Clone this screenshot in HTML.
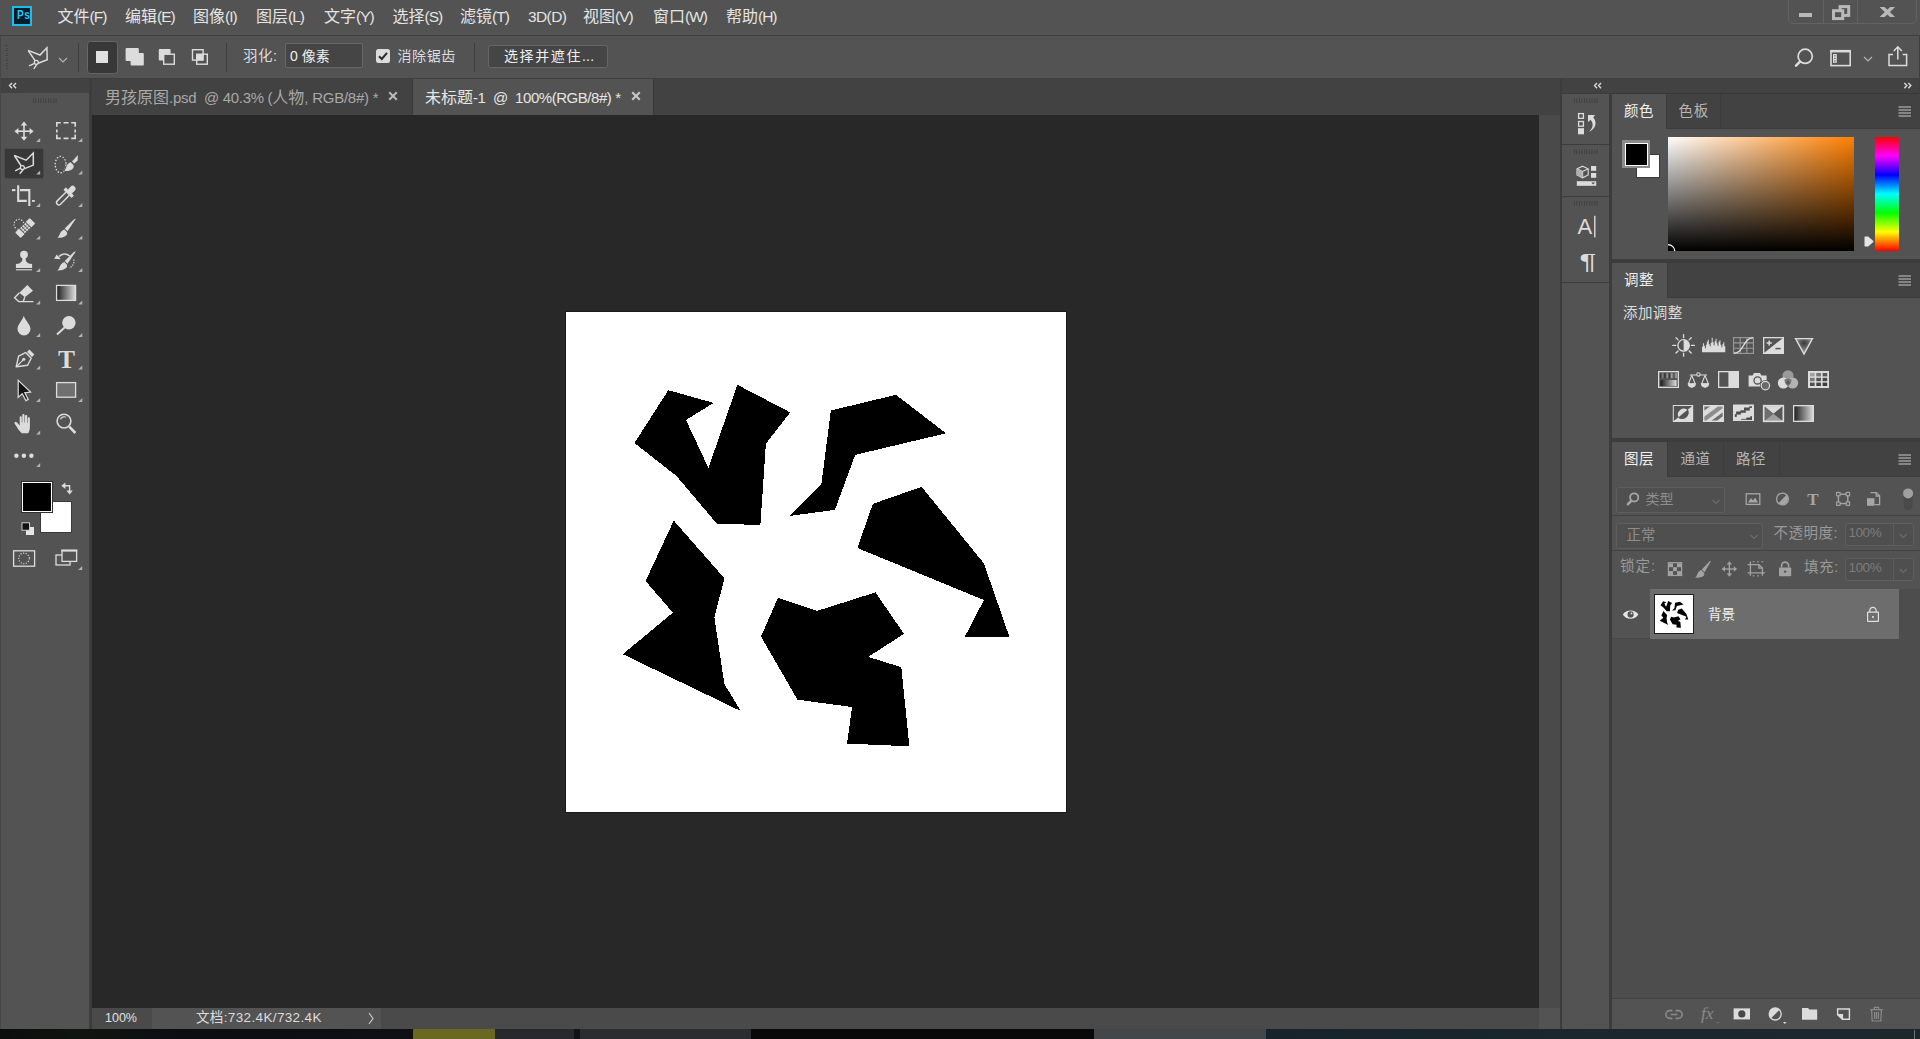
<!DOCTYPE html>
<html lang="zh-CN">
<head>
<meta charset="utf-8">
<title>Photoshop</title>
<style>
*{box-sizing:border-box;margin:0;padding:0}
html,body{width:1920px;height:1039px;overflow:hidden;background:#0e1116}
body{position:relative;font-family:"Liberation Sans","Noto Sans CJK SC",sans-serif;color:#dcdcdc;font-size:14px;line-height:1}
.abs{position:absolute}
.t{position:absolute;white-space:nowrap;line-height:20px;height:20px}
svg{position:absolute;overflow:visible}
/* main chrome */
#menubar{left:0;top:0;width:1920px;height:35px;background:#535353}
#optbar{left:0;top:35px;width:1920px;height:44px;background:#535353;border-top:1px solid #3f3f3f;border-bottom:1px solid #3f3f3f}
#desk{left:0;top:1029px;width:1920px;height:10px;background:#10151a}
#tools{left:0;top:79px;width:90px;height:950px;background:#535353;border-right:1px solid #3f3f3f}
#toolshead{left:0;top:79px;width:89px;height:14px;background:#424242}
#docgap{left:90px;top:79px;width:2px;height:950px;background:#3c3c3c}
#tabbar{left:92px;top:79px;width:1468px;height:36px;background:#424242}
#canvasbg{left:92px;top:115px;width:1447px;height:893px;background:#282828}
#vscroll{left:1539px;top:115px;width:21px;height:893px;background:#4a4a4a}
#status{left:92px;top:1008px;width:1468px;height:21px;background:#4a4a4a}
#dockgap{left:1560px;top:79px;width:2px;height:950px;background:#3c3c3c}
#dockhead{left:1562px;top:79px;width:358px;height:15px;background:#424242;border-bottom:1px solid #383838}
#strip{left:1562px;top:93px;width:48px;height:936px;background:#535353;border-top:1px solid #3c3c3c}
#stripgap{left:1609px;top:93px;width:3px;height:936px;background:#3c3c3c}
.panel{position:absolute;left:1612px;width:308px;background:#535353}
.ptabs{position:absolute;left:0;top:0;width:308px;height:35px;background:#424242;border-bottom:1px solid #3c3c3c}
.ptab{position:absolute;top:0;height:34px;border-right:1px solid #3c3c3c;color:#b4b4b4;font-size:14.5px;letter-spacing:0.5px;line-height:34px;text-align:left}
.ptab.on{background:#535353;color:#f0f0f0;height:35px}
.pgap{position:absolute;left:1612px;width:308px;height:4px;background:#3c3c3c}
</style>
</head>
<body>
<!-- ===== base regions ===== -->
<div class="abs" id="menubar"></div>
<div class="abs" id="optbar"></div>
<div class="abs" id="tools"></div>
<div class="abs" id="toolshead"></div>
<div class="abs" id="docgap"></div>
<div class="abs" id="tabbar"></div>
<div class="abs" id="canvasbg"></div>
<div class="abs" id="vscroll"></div>
<div class="abs" id="status"></div>
<div class="abs" id="dockgap"></div>
<div class="abs" id="dockhead"></div>
<div class="abs" id="strip"></div>
<div class="abs" id="stripgap"></div>
<div class="abs" id="desk"></div>

<!-- ===== MENUBAR ===== -->
<!-- PS logo -->
<div class="abs" style="left:12px;top:6px;width:20.3px;height:20px;background:#001c25;border:2px solid #16bef2"></div>
<div class="t" style="left:16.6px;top:5.4px;font-size:12.5px;font-weight:bold;color:#1cc8ff;letter-spacing:0.6px;line-height:20px;transform:scaleX(0.8);transform-origin:0 0">Ps</div>
<div class="t" style="left:57.5px;top:5.5px;font-size:16px;color:#e4e4e4;line-height:22px;height:22px">文件<span style="font-size:15.5px;letter-spacing:-1px">(F)</span></div>
<div class="t" style="left:125px;top:5.5px;font-size:16px;color:#e4e4e4;line-height:22px;height:22px">编辑<span style="font-size:15.5px;letter-spacing:-1px">(E)</span></div>
<div class="t" style="left:193px;top:5.5px;font-size:16px;color:#e4e4e4;line-height:22px;height:22px">图像<span style="font-size:15.5px;letter-spacing:-1px">(I)</span></div>
<div class="t" style="left:256px;top:5.5px;font-size:16px;color:#e4e4e4;line-height:22px;height:22px">图层<span style="font-size:15.5px;letter-spacing:-1px">(L)</span></div>
<div class="t" style="left:324px;top:5.5px;font-size:16px;color:#e4e4e4;line-height:22px;height:22px">文字<span style="font-size:15.5px;letter-spacing:-1px">(Y)</span></div>
<div class="t" style="left:392.5px;top:5.5px;font-size:16px;color:#e4e4e4;line-height:22px;height:22px">选择<span style="font-size:15.5px;letter-spacing:-1px">(S)</span></div>
<div class="t" style="left:460px;top:5.5px;font-size:16px;color:#e4e4e4;line-height:22px;height:22px">滤镜<span style="font-size:15.5px;letter-spacing:-1px">(T)</span></div>
<div class="t" style="left:528px;top:5.5px;font-size:16px;color:#e4e4e4;line-height:22px;height:22px"><span style="font-size:15.5px;letter-spacing:-0.6px">3D(D)</span></div>
<div class="t" style="left:583px;top:5.5px;font-size:16px;color:#e4e4e4;line-height:22px;height:22px">视图<span style="font-size:15.5px;letter-spacing:-1px">(V)</span></div>
<div class="t" style="left:653px;top:5.5px;font-size:16px;color:#e4e4e4;line-height:22px;height:22px">窗口<span style="font-size:15.5px;letter-spacing:-1px">(W)</span></div>
<div class="t" style="left:726px;top:5.5px;font-size:16px;color:#e4e4e4;line-height:22px;height:22px">帮助<span style="font-size:15.5px;letter-spacing:-1px">(H)</span></div>
<!-- window controls -->
<div class="abs" style="left:1788px;top:-2px;width:129px;height:26px;border:1px solid #626262;border-radius:0 0 5px 5px"></div>
<div class="abs" style="left:1823px;top:0;width:1px;height:23px;background:#626262"></div>
<div class="abs" style="left:1857px;top:0;width:1px;height:23px;background:#626262"></div>
<div class="abs" style="left:1799px;top:12.8px;width:13.2px;height:4.3px;background:#b9b9b9"></div>
<svg style="left:1830px;top:3px" width="22" height="19" viewBox="1830 3 22 19"><rect x="1840.1" y="6.6" width="8.6" height="8.8" fill="none" stroke="#b9b9b9" stroke-width="3"/><rect x="1833.5" y="10.7" width="9.2" height="7.9" fill="#535353" stroke="#b9b9b9" stroke-width="3"/></svg>
<svg style="left:1879px;top:6.9px;overflow:hidden" width="17" height="10.3" viewBox="1879 6.9 17 10.3"><path d="M1881 6 L1893.7 18 M1893.7 6 L1881 18" stroke="#b9b9b9" stroke-width="3.5" fill="none"/></svg>

<!-- ===== OPTIONS BAR ===== -->
<!-- gripper -->
<svg style="left:4px;top:44px" width="6" height="26" viewBox="4 44 6 26"><path d="M5 45.5h3M5 50.5h3M5 55.5h3M5 60.5h3M5 65.5h3M6 48.5h2M6 53.5h2M6 58.5h2M6 63.5h2M6 68.5h2" stroke="#444" stroke-width="1" fill="none"/></svg>
<!-- polygon lasso icon -->
<svg style="left:27px;top:46px" width="23" height="24" viewBox="0 0 23 24"><path d="M1.1 4.4 L13 9 L19.9 1.8 L20.2 13.8 L11.2 17.2" stroke="#dcdcdc" stroke-width="1.5" fill="none" stroke-linejoin="miter"/><path d="M1.3 4.6 L8.2 14.8" stroke="#dcdcdc" stroke-width="1.5" fill="none"/><circle cx="9.3" cy="16.3" r="2" stroke="#dcdcdc" stroke-width="1.3" fill="none"/><path d="M7.6 17.4 L2 19.8 M10 18.2 L6.8 22.8" stroke="#dcdcdc" stroke-width="1.4" fill="none"/></svg>
<svg style="left:58px;top:57px" width="10" height="6" viewBox="0 0 10 6"><path d="M1 1 L5 5 L9 1" stroke="#b4b4b4" stroke-width="1.2" fill="none"/></svg>
<div class="abs" style="left:78px;top:43px;width:1px;height:29px;background:#3e3e3e"></div>
<!-- selection mode buttons -->
<div class="abs" style="left:87px;top:41px;width:31px;height:32.5px;background:#383838;border:1px solid #666;border-radius:3.5px"></div>
<div class="abs" style="left:95.8px;top:50.8px;width:12.4px;height:12.4px;background:#e0e0e0"></div>
<svg style="left:125px;top:47px" width="20" height="20" viewBox="0 0 20 20"><rect x="0.6" y="1" width="13.2" height="13" rx="1" fill="#dcdcdc"/><rect x="5.6" y="6" width="13.2" height="12.6" rx="1" fill="#dcdcdc"/></svg>
<svg style="left:158px;top:48px" width="18" height="18" viewBox="0 0 18 18"><rect x="0.8" y="1" width="11.8" height="11.6" rx="0.8" fill="#dcdcdc"/><rect x="5.7" y="6.2" width="10.6" height="10" fill="#535353" stroke="#dcdcdc" stroke-width="1.4"/></svg>
<svg style="left:191px;top:48px" width="18" height="18" viewBox="0 0 18 18"><rect x="1.5" y="1.7" width="10.6" height="10.4" fill="none" stroke="#dcdcdc" stroke-width="1.4"/><rect x="5.7" y="6.2" width="10.6" height="10" fill="none" stroke="#dcdcdc" stroke-width="1.4"/><rect x="5.7" y="6.2" width="6.4" height="5.9" fill="#dcdcdc"/></svg>
<div class="abs" style="left:226px;top:43px;width:1px;height:29px;background:#3e3e3e"></div>
<div class="t" style="left:243px;top:45px;font-size:14.5px;color:#dcdcdc;line-height:22px;height:22px;letter-spacing:0.5px">羽化:</div>
<div class="abs" style="left:285px;top:43px;width:78px;height:25px;background:#454545;border:1px solid #686868;border-radius:2px"></div>
<div class="t" style="left:290px;top:45px;font-size:14px;color:#f0f0f0;line-height:22px;height:22px">0 像素</div>
<div class="abs" style="left:376px;top:49px;width:14px;height:14px;background:#dcdcdc;border-radius:2.5px"></div>
<svg style="left:376px;top:49px" width="14" height="14" viewBox="0 0 14 14"><path d="M3 7.2 L5.8 10 L11 3.8" stroke="#2a2a2a" stroke-width="2" fill="none"/></svg>
<div class="t" style="left:397.5px;top:45px;font-size:14px;color:#dcdcdc;line-height:22px;height:22px;letter-spacing:0.6px">消除锯齿</div>
<div class="abs" style="left:474px;top:43px;width:1px;height:29px;background:#3e3e3e"></div>
<div class="abs" style="left:488px;top:45px;width:120px;height:23px;background:#454545;border:1px solid #666;border-radius:3px"></div>
<div class="t" style="left:504px;top:45px;font-size:14px;color:#f0f0f0;line-height:22px;height:22px;letter-spacing:1.6px">选择并遮住<span style="letter-spacing:0.2px">...</span></div>
<!-- right side icons -->
<svg style="left:1793px;top:46px" width="22" height="22" viewBox="1793 46 22 22"><circle cx="1805.2" cy="56.3" r="7.1" stroke="#dcdcdc" stroke-width="1.7" fill="none"/><path d="M1800 61.6 L1796 65.6" stroke="#dcdcdc" stroke-width="2.5" stroke-linecap="round" fill="none"/></svg>
<svg style="left:1829px;top:48px" width="24" height="20" viewBox="1829 48 24 20"><rect x="1831" y="51.4" width="19.2" height="14.2" fill="none" stroke="#dcdcdc" stroke-width="1.6"/><rect x="1830.2" y="49.9" width="20.8" height="2.4" fill="#dcdcdc"/><rect x="1833" y="54" width="3.8" height="8.8" fill="#dcdcdc"/><path d="M1834.2 55.8h1.4M1834.2 58.4h1.4M1834.2 61h1.4" stroke="#535353" stroke-width="1"/></svg>
<svg style="left:1863px;top:56px" width="10" height="6" viewBox="0 0 10 6"><path d="M1 1 L5 5 L9 1" stroke="#b4b4b4" stroke-width="1.2" fill="none"/></svg>
<svg style="left:1887px;top:45px" width="22" height="22" viewBox="0 0 22 22"><path d="M6 9.5 H2 V20.5 H19.6 V9.5 H15.6" stroke="#dcdcdc" stroke-width="1.5" fill="none"/><path d="M10.8 14.5 V2.2 M6.8 6 L10.8 1.8 L14.8 6" stroke="#dcdcdc" stroke-width="1.5" fill="none"/></svg>
<div class="abs" style="left:1919px;top:36px;width:1px;height:993px;background:#3f3f3f"></div>
<div class="abs" style="left:0;top:36px;width:1px;height:993px;background:#464646"></div>

<!-- ===== TOOLS ===== -->
<svg style="left:0;top:0" width="92" height="600" viewBox="0 0 92 600"><defs><linearGradient id="tg" x1="0" x2="1" y1="0" y2="0"><stop offset="0" stop-color="#1e1e1e"/><stop offset="1" stop-color="#dcdcdc"/></linearGradient></defs>
<path d="M12 83 L9.6 85.6 L12 88.2 M16 83 L13.6 85.6 L16 88.2" fill="none" stroke="#d4d4d4" stroke-width="1.5"/>
<path d="M33.4 98.4v4.6M35.7 98.4v4.6M38.5 98.4v4.6M40.8 98.4v4.6M43.6 98.4v4.6M45.9 98.4v4.6M48.7 98.4v4.6M51.0 98.4v4.6M53.8 98.4v4.6M56.1 98.4v4.6" stroke="#414141" stroke-width="1" fill="none"/>
<rect x="4.5" y="148.5" width="39" height="30" rx="2" fill="#383838" stroke="#4a4a4a" stroke-width="1"/>
<g transform="translate(24,131.2)" fill="#dcdcdc" stroke="none"><rect x="-7" y="-0.8" width="14" height="1.6"/><rect x="-0.8" y="-7" width="1.6" height="14"/><polygon points="0,-9.6 3.3,-5.6 -3.3,-5.6"/><polygon points="0,9.6 3.3,5.6 -3.3,5.6"/><polygon points="-9.6,0 -5.6,-3.3 -5.6,3.3"/><polygon points="9.6,0 5.6,-3.3 5.6,3.3"/></g>
<polygon points="40.2,138.0 40.2,142.1 36.1,142.1" fill="#b4b4b4"/>
<g transform="translate(66,131)" fill="none" stroke="#dcdcdc" stroke-width="1.6"><path d="M-9.2 -4.2V-8.2H-5.2 M-2.5 -8.2H2.5 M5.2 -8.2H9.2V-4.2 M9.2 -1.5V1.5 M9.2 3.6V7.4H5.2 M2.5 7.4H-2.5 M-5.2 7.4H-9.2V3.6 M-9.2 1.5V-1.5"/></g>
<polygon points="82.3,138.0 82.3,142.1 78.2,142.1" fill="#b4b4b4"/>
<g transform="translate(24,164.0)" fill="none" stroke="#dcdcdc" stroke-width="1.5" stroke-linejoin="miter"><path d="M-9.8 -8.6 L2.1 -3.8 L9.3 -11 L9.3 1.1 L0.6 4.6"/><path d="M-9.6 -8.5 L-2.8 2"/><circle cx="-1.6" cy="3.6" r="2" stroke-width="1.3"/><path d="M-3.6 4.2 L-8.8 6.8 M-0.8 5.6 L-4.3 9.8"/></g>
<polygon points="40.2,170.5 40.2,174.6 36.1,174.6" fill="#b4b4b4"/>
<g transform="translate(66,164.0)"><ellipse cx="-5.4" cy="0.6" rx="5.4" ry="8.2" fill="none" stroke="#dcdcdc" stroke-width="1.4" stroke-dasharray="1.4 1.7"/><path d="M11.9 -8.9 L11.6 -3.4 L8.3 -0.4 L6 -2.4 Z" fill="#dcdcdc"/><path d="M4.6 -1.8 L7.4 1 C9 4.6 4.5 7.6 -1.8 6.9 C1 5 -0.6 -0.2 4.6 -1.8Z" fill="#dcdcdc" stroke="#535353" stroke-width="1.2" paint-order="stroke"/></g>
<polygon points="82.3,170.5 82.3,174.6 78.2,174.6" fill="#b4b4b4"/>
<g transform="translate(24,196)" fill="none" stroke="#dcdcdc" stroke-width="2.1"><path d="M-5.8 -10.8 V4.9 H2.8"/><path d="M-12 -5.9 H-8.6"/><path d="M-4 -5.9 H5.3 V10"/><path d="M8 4.9 H10.8" stroke-width="1.8"/></g>
<polygon points="40.2,203.0 40.2,207.1 36.1,207.1" fill="#b4b4b4"/>
<g transform="translate(65.8,195.6) rotate(45)"><rect x="-2.9" y="-12.6" width="5.8" height="8" rx="2.6" fill="#dcdcdc"/><rect x="-5.8" y="-5.8" width="11.6" height="3.4" rx="0.6" fill="#dcdcdc"/><path d="M-2.3 -2.4 V9.8 A2.3 2.3 0 0 0 2.3 9.8 V-2.4" fill="none" stroke="#dcdcdc" stroke-width="1.5"/></g>
<polygon points="82.3,203.0 82.3,207.1 78.2,207.1" fill="#b4b4b4"/>
<g transform="translate(24,228.0)"><circle cx="-5" cy="-3.6" r="5" fill="none" stroke="#dcdcdc" stroke-width="1.2" stroke-dasharray="1.3 1.5"/><g transform="translate(1.2,0) rotate(-45)"><rect x="-10.6" y="-4.2" width="21.2" height="8.4" rx="1" fill="#dcdcdc" stroke="#535353" stroke-width="0.8"/><rect x="-4.8" y="-4.2" width="9.6" height="8.4" fill="#535353"/><g fill="#dcdcdc"><rect x="-3.9" y="-3.4" width="2.1" height="1.9"/><rect x="-1.05" y="-3.4" width="2.1" height="1.9"/><rect x="1.8" y="-3.4" width="2.1" height="1.9"/><rect x="-3.9" y="-0.95" width="2.1" height="1.9"/><rect x="-1.05" y="-0.95" width="2.1" height="1.9"/><rect x="1.8" y="-0.95" width="2.1" height="1.9"/><rect x="-3.9" y="1.5" width="2.1" height="1.9"/><rect x="-1.05" y="1.5" width="2.1" height="1.9"/><rect x="1.8" y="1.5" width="2.1" height="1.9"/></g></g></g>
<polygon points="40.2,235.5 40.2,239.6 36.1,239.6" fill="#b4b4b4"/>
<g transform="translate(66,228.0)" fill="#dcdcdc"><path d="M10 -9.4 L7.8 -8.6 L-1.3 0.4 L1.5 3.2 Z"/><path d="M-1.6 1.5 L0.8 3.9 C2.4 7 -1.6 10 -8.7 9.8 C-5.8 8.2 -6.6 3 -1.6 1.5Z"/></g>
<polygon points="82.3,235.5 82.3,239.6 78.2,239.6" fill="#b4b4b4"/>
<g transform="translate(24,261)" fill="#dcdcdc"><circle cx="0" cy="-6.4" r="3.9"/><path d="M-1.6 -3.5 H1.6 C1.6 0.5 2.5 2.6 8.1 3 V7 H-8.1 V3 C-2.5 2.6 -1.6 0.5 -1.6 -3.5Z"/><rect x="-8.1" y="8.2" width="16.2" height="1.1"/></g>
<polygon points="40.2,268.0 40.2,272.1 36.1,272.1" fill="#b4b4b4"/>
<g transform="translate(66,261)"><path d="M-7 -4.4 C-4 -7.8 0.5 -7.8 3.6 -5" fill="none" stroke="#dcdcdc" stroke-width="1.5"/><polygon points="-11.8,-2.2 -5.2,-1.8 -9.2,-6.6" fill="#dcdcdc"/><path d="M7.8 -1.6 C8.6 3 6 6 3 6.8" fill="none" stroke="#dcdcdc" stroke-width="1.2" stroke-dasharray="1.2 1.4"/></g>
<g transform="translate(66,260.6)" fill="#dcdcdc"><path d="M10 -9.4 L7.8 -8.6 L-1.3 0.4 L1.5 3.2 Z"/><path d="M-1.6 1.5 L0.8 3.9 C2.4 7 -1.6 10 -8.7 9.8 C-5.8 8.2 -6.6 3 -1.6 1.5Z"/></g>
<polygon points="82.3,268.0 82.3,272.1 78.2,272.1" fill="#b4b4b4"/>
<g transform="translate(24,293.0)"><path d="M3.3 -8 L9 -2.3 L0.8 4.3 L-4.6 -0.3 Z" fill="#dcdcdc"/><path d="M-4.6 -0.3 L-9.4 4.8 L-5.3 8.6 H9.4 M-5.3 8.6 H-0.8 L0.8 4.3" fill="none" stroke="#dcdcdc" stroke-width="1.4"/></g>
<polygon points="40.2,300.5 40.2,304.6 36.1,304.6" fill="#b4b4b4"/>
<rect x="56.6" y="285.4" width="19" height="15" fill="url(#tg)" stroke="#dcdcdc" stroke-width="1.3"/>
<polygon points="82.3,300.5 82.3,304.6 78.2,304.6" fill="#b4b4b4"/>
<g transform="translate(24,326)"><path d="M-0.2 -10.2 C0.8 -6 6.5 -1.5 6.5 3 A6.5 6.5 0 1 1 -6.5 3 C-6.5 -1.5 -1.2 -6 -0.2 -10.2Z" fill="#dcdcdc"/></g>
<polygon points="40.2,333.0 40.2,337.1 36.1,337.1" fill="#b4b4b4"/>
<g transform="translate(66,326)"><circle cx="2.9" cy="-3.3" r="6.7" fill="#dcdcdc"/><path d="M-1.4 1.6 L-9 8.4" stroke="#dcdcdc" stroke-width="2" fill="none"/></g>
<polygon points="82.3,333.0 82.3,337.1 78.2,337.1" fill="#b4b4b4"/>
<g transform="translate(24,359.0)"><path d="M-7.8 7.8 L-5.4 -2.8 L1.6 -6.4 L7.2 -0.8 L3.6 6.2 Z" fill="none" stroke="#dcdcdc" stroke-width="1.4" stroke-linejoin="round"/><path d="M-7.8 7.8 L-0.6 0.6" stroke="#dcdcdc" stroke-width="1.2"/><circle cx="-0.2" cy="0.2" r="1.5" fill="#dcdcdc"/><path d="M3 -7 L5.4 -9.4 L10.4 -4.4 L8 -2 Z" fill="#dcdcdc"/></g>
<polygon points="40.2,365.5 40.2,369.6 36.1,369.6" fill="#b4b4b4"/>
<text x="66.6" y="367.7" text-anchor="middle" font-family="Liberation Serif,serif" font-weight="bold" font-size="25.5" fill="#dcdcdc">T</text>
<polygon points="82.3,365.5 82.3,369.6 78.2,369.6" fill="#b4b4b4"/>
<g transform="translate(24,391)"><path d="M-5.8 -10.6 V6.4 L-1.8 2.8 L1.9 9.6 L4.2 8.4 L0.8 1.8 L6.6 1 Z" fill="#141414" stroke="#dcdcdc" stroke-width="1.2" stroke-linejoin="miter"/></g>
<polygon points="40.2,398.0 40.2,402.1 36.1,402.1" fill="#b4b4b4"/>
<rect x="56.6" y="382.6" width="19" height="14.6" fill="#707070" stroke="#dcdcdc" stroke-width="1.3"/>
<polygon points="82.3,398.0 82.3,402.1 78.2,402.1" fill="#b4b4b4"/>
<g transform="translate(24,424.0)" fill="#dcdcdc"><path d="M-2.2 9.2 C-5 7 -7 3.4 -9.4 -0.4 C-10 -1.9 -8.2 -2.9 -7 -1.6 L-4.3 1.6 V-6.6 C-4.3 -8.3 -2.2 -8.3 -2.2 -6.6 V-1.5 H-1.7 V-8.6 C-1.7 -10.4 0.5 -10.4 0.5 -8.6 V-1.5 H1 V-7.8 C1 -9.5 3.2 -9.5 3.2 -7.8 V-1.2 H3.7 V-5.6 C3.7 -7.3 5.9 -7.3 5.9 -5.6 V3 C5.9 6 5 7.6 4.2 9.2 Z"/></g>
<polygon points="40.2,430.5 40.2,434.6 36.1,434.6" fill="#b4b4b4"/>
<g transform="translate(66,424.0)" fill="none" stroke="#dcdcdc"><circle cx="-2" cy="-2.9" r="6.9" stroke-width="1.6"/><path d="M3.2 2.6 L9.4 9" stroke-width="2.6"/><path d="M-5.6 -4.6 A4.2 4.2 0 0 1 0 -6.8" stroke-width="1.1"/></g>
<circle cx="16.4" cy="455.7" r="2.2" fill="#dcdcdc"/><circle cx="23.9" cy="455.7" r="2.2" fill="#dcdcdc"/><circle cx="31.4" cy="455.7" r="2.2" fill="#dcdcdc"/>
<polygon points="40.2,463 40.2,467.1 36.2,467.1" fill="#b4b4b4"/>
<rect x="40.5" y="501.5" width="31" height="31" fill="#ffffff" stroke="#3a3a3a" stroke-width="1"/>
<rect x="21.5" y="481.5" width="31" height="31" fill="#000" stroke="#2e2e2e" stroke-width="1"/><rect x="22.5" y="482.5" width="29" height="29" fill="#000" stroke="#fff" stroke-width="1"/>
<g fill="none" stroke="#dcdcdc" stroke-width="1.4"><path d="M64 485.8 H69.6 V491.5"/></g><polygon points="61.3,485.8 65.4,482.6 65.4,489" fill="#dcdcdc"/><polygon points="69.6,494.6 66.4,490.4 72.8,490.4" fill="#dcdcdc"/>
<rect x="26" y="527" width="8" height="8" fill="#e6e6e6"/><rect x="22" y="522.8" width="7.6" height="7.4" fill="#111" stroke="#dcdcdc" stroke-width="0.9"/>
<rect x="13.6" y="550.8" width="21" height="15.4" fill="none" stroke="#dcdcdc" stroke-width="1.3"/><circle cx="24" cy="558.4" r="5.3" fill="none" stroke="#dcdcdc" stroke-width="1.2" stroke-dasharray="1.1 1.5"/>
<rect x="56" y="555" width="14" height="10" fill="none" stroke="#dcdcdc" stroke-width="1.3"/><rect x="62" y="550.4" width="14.6" height="11" fill="#535353" stroke="#dcdcdc" stroke-width="1.3"/><rect x="61.4" y="549.6" width="15.8" height="2" fill="#dcdcdc"/>
<polygon points="82.2,566 82.2,570.1 78.2,570.1" fill="#b4b4b4"/>
</svg>

<!-- ===== DOC TABS + CANVAS ===== -->
<!-- doc tabs -->
<div class="abs" style="left:92px;top:79px;width:321px;height:35px;background:#424242;border-right:1px solid #383838"></div>
<div class="t" id="tab1" style="left:105px;top:87px;font-size:16px;color:#a8a8a8;line-height:21px;height:21px">男孩原图<span style="font-size:15px;letter-spacing:-0.3px">.psd&nbsp; @ 40.3% (</span>人物<span style="font-size:15px;letter-spacing:-0.25px">, RGB/8#)&nbsp;*</span></div>
<svg style="left:388px;top:91px" width="10" height="10" viewBox="0 0 10 10"><path d="M1.2 1.2 L8.8 8.8 M8.8 1.2 L1.2 8.8" stroke="#b8b8b8" stroke-width="2.1" fill="none"/></svg>
<div class="abs" style="left:413px;top:79px;width:241px;height:36px;background:#535353;border-right:1px solid #383838"></div>
<div class="t" id="tab2" style="left:425px;top:87px;font-size:16px;color:#e6e6e6;line-height:21px;height:21px">未标题<span style="font-size:15px;letter-spacing:-0.45px">-1&nbsp; @&nbsp; 100%(RGB/8#) *</span></div>
<svg style="left:631px;top:91px" width="10" height="10" viewBox="0 0 10 10"><path d="M1.2 1.2 L8.8 8.8 M8.8 1.2 L1.2 8.8" stroke="#c8c8c8" stroke-width="2.1" fill="none"/></svg>
<!-- canvas -->
<div class="abs" style="left:565px;top:311px;width:502px;height:502px;background:#1a1a1a"></div>
<svg style="left:566px;top:312px" width="500" height="500" viewBox="566 312 500 500" shape-rendering="crispEdges">
<rect x="566" y="312" width="500" height="500" fill="#ffffff"/>
<g fill="#000000">
<polygon points="668.3,390.2 713.6,402.9 686,420 708.4,467.9 737.4,384.8 790.2,412.4 765.9,443.6 760.4,524.8 717.1,524 676.5,476 634.5,443"/>
<polygon points="830.9,410.5 895.9,394.8 946,433.3 855.2,454.9 834.9,509.9 789.7,515.9 821.4,484.2"/>
<polygon points="872.8,503.9 921.6,486.8 983.9,563.4 1009.6,637.4 964.9,636.6 983.9,600 857.4,548"/>
<polygon points="673.8,520.6 724.4,578.3 714.4,617.6 724.4,684 740.7,711 622.8,654.2 672.9,612.7 645.6,581"/>
<polygon points="778,597.8 817.3,610.8 875.5,592.4 904,633.9 868.2,656.9 901.3,667.2 909.4,746.3 847.1,743.6 852,707 797.5,699.7 761,636.6"/>
</g>
</svg>
<!-- status bar -->
<div class="abs" style="left:152px;top:1008px;width:229px;height:21px;background:#535353"></div>
<div class="t" style="left:105px;top:1008px;font-size:12.5px;color:#e0e0e0;line-height:20px">100%</div>
<div class="t" style="left:196px;top:1008px;font-size:13.5px;color:#dcdcdc;line-height:20px;letter-spacing:0.36px">文档:732.4K/732.4K</div>
<svg style="left:367px;top:1012px" width="8" height="13" viewBox="0 0 8 13"><path d="M2 1 L6 6.5 L2 12" stroke="#c8c8c8" stroke-width="1.2" fill="none"/></svg>
<div class="abs" style="left:1539px;top:1008px;width:21px;height:21px;background:#535353"></div>

<!-- ===== ICON STRIP ===== -->
<svg style="left:1562px;top:79px" width="358" height="220" viewBox="1562 79 358 220">
<path d="M1597 83 L1594.6 85.6 L1597 88.2 M1601 83 L1598.6 85.6 L1601 88.2" fill="none" stroke="#d4d4d4" stroke-width="1.5"/>
<path d="M1904.4 83 L1906.8 85.6 L1904.4 88.2 M1908.4 83 L1910.8 85.6 L1908.4 88.2" fill="none" stroke="#d4d4d4" stroke-width="1.5"/>
<g stroke="#414141" stroke-width="1" fill="none">
<path d="M1574.4 98.4v4.6M1576.7 98.4v4.6M1579.5 98.4v4.6M1581.8 98.4v4.6M1584.6 98.4v4.6M1586.9 98.4v4.6M1589.7 98.4v4.6M1592.0 98.4v4.6M1594.8 98.4v4.6M1597.1 98.4v4.6"/>
<path d="M1574.4 149.6v4.6M1576.7 149.6v4.6M1579.5 149.6v4.6M1581.8 149.6v4.6M1584.6 149.6v4.6M1586.9 149.6v4.6M1589.7 149.6v4.6M1592.0 149.6v4.6M1594.8 149.6v4.6M1597.1 149.6v4.6"/>
<path d="M1574.4 201v4.6M1576.7 201v4.6M1579.5 201v4.6M1581.8 201v4.6M1584.6 201v4.6M1586.9 201v4.6M1589.7 201v4.6M1592.0 201v4.6M1594.8 201v4.6M1597.1 201v4.6"/>
</g>
<rect x="1562" y="144" width="47" height="1" fill="#3c3c3c"/>
<rect x="1562" y="196" width="47" height="1" fill="#3c3c3c"/>
<rect x="1562" y="282" width="47" height="1" fill="#3c3c3c"/>
<!-- history -->
<g fill="none" stroke="#dcdcdc" stroke-width="1.3"><rect x="1578.6" y="113.6" width="4.8" height="4.7"/><rect x="1578.6" y="121.5" width="4.8" height="4.7"/></g>
<rect x="1578" y="128.2" width="6" height="6.1" fill="#dcdcdc"/>
<path d="M1588 115.1 H1595.1 L1593.2 117.2 C1597 121.5 1596.6 128.5 1588.8 132 C1593 128 1594.2 124 1590.4 119.8 L1588 122.3 Z" fill="#dcdcdc"/>
<!-- 3D -->
<g fill="none" stroke="#dcdcdc" stroke-width="1.1"><path d="M1582.6 166.2 L1588.2 168.8 V175 L1582.6 177.8 L1577 175 V168.8 Z"/><path d="M1577 168.8 L1582.6 171.4 L1588.2 168.8 M1582.6 171.4 V177.8"/></g>
<path d="M1577 168.8 L1582.6 171.4 V177.8 L1577 175 Z" fill="#b0b0b0"/>
<rect x="1591" y="166" width="5.2" height="4.8" fill="#dcdcdc"/><rect x="1591" y="173" width="5.2" height="4.8" fill="#dcdcdc"/>
<rect x="1576.8" y="181.2" width="19.4" height="4.6" fill="#dcdcdc"/><path d="M1591.4 182.4 h3.6 l-1.8 2.2z" fill="#444"/>
<!-- character -->
<text x="1577.4" y="233.9" font-family="Liberation Sans,sans-serif" font-size="22" fill="#dcdcdc">A</text>
<rect x="1594.1" y="215.8" width="1.4" height="21.6" fill="#dcdcdc"/>
<!-- paragraph -->
<text transform="translate(1579.4,269.2) scale(1.3,0.92)" x="0" y="0" font-family="Liberation Sans,sans-serif" font-size="24" fill="#dcdcdc">¶</text>
</svg>

<!-- ===== COLOR PANEL ===== -->
<div class="panel" style="top:94px;height:165px">
<div class="ptabs"></div>
<div class="ptab on" style="left:0;width:55px;padding-left:12px">颜色</div>
<div class="ptab" style="left:55px;width:54px;padding-left:11.5px;letter-spacing:0.8px">色板</div>
</div>
<svg style="left:1898px;top:106px" width="14" height="11" viewBox="0 0 14 11"><path d="M0.5 1H13M0.5 4H13M0.5 7H13M0.5 10H13" stroke="#c8c8c8" stroke-width="1.2"/></svg>
<div class="abs" style="left:1622px;top:140px;width:28px;height:28px;background:#8c8c8c"></div>
<div class="abs" style="left:1636px;top:154px;width:24px;height:24px;background:#fff;border:1px solid #3a3a3a"></div>
<div class="abs" style="left:1622px;top:140px;width:28px;height:28px;background:#000;border:3px solid #8c8c8c;outline:0"></div>
<div class="abs" style="left:1624.5px;top:142.5px;width:23px;height:23px;background:#000;border:1.5px solid #fff"></div>
<div class="abs" style="left:1668px;top:137px;width:186px;height:114px;background:linear-gradient(to top,#000 0%,rgba(0,0,0,0) 100%),linear-gradient(to right,#fff 0%,#ff7f00 100%)"></div>
<svg style="left:1668px;top:244px;overflow:hidden" width="8" height="7" viewBox="0 0 8 7"><circle cx="0" cy="7.4" r="6.8" stroke="#fff" stroke-width="1.2" fill="none"/></svg>
<div class="abs" style="left:1875px;top:137px;width:24px;height:114px;background:linear-gradient(to bottom,#ff0000 0%,#ff00ff 16.6%,#0000ff 33.3%,#00ffff 50%,#00ff00 66.6%,#ffff00 83.3%,#ff0000 100%)"></div>
<svg style="left:1864px;top:236px" width="10" height="11" viewBox="0 0 10 11"><path d="M1.2 1.2 H4 L8.8 5.5 L4 9.8 H1.2 Z" fill="#e6e6e6" stroke="#e6e6e6" stroke-width="1.4" stroke-linejoin="round"/></svg>
<div class="pgap" style="top:259px"></div>

<!-- ===== ADJUST PANEL ===== -->
<div class="panel" style="top:263px;height:175px">
<div class="ptabs"></div>
<div class="ptab on" style="left:0;width:56px;padding-left:12px">调整</div>
</div>
<svg style="left:1898px;top:275px" width="14" height="11" viewBox="0 0 14 11"><path d="M0.5 1H13M0.5 4H13M0.5 7H13M0.5 10H13" stroke="#c8c8c8" stroke-width="1.2"/></svg>
<div class="t" style="left:1623px;top:303px;font-size:14.5px;color:#dcdcdc;line-height:20px;letter-spacing:0.4px">添加调整</div>
<svg style="left:1612px;top:300px" width="308" height="140" viewBox="1612 300 308 140"><defs><linearGradient id="lr" x1="0" x2="1" y1="0" y2="0"><stop offset="0" stop-color="#1c1c1c"/><stop offset="1" stop-color="#dcdcdc"/></linearGradient><linearGradient id="hs" x1="0" x2="1" y1="0" y2="0"><stop offset="0" stop-color="#222"/><stop offset="0.14" stop-color="#888"/><stop offset="0.28" stop-color="#2a2a2a"/><stop offset="0.42" stop-color="#999"/><stop offset="0.56" stop-color="#333"/><stop offset="0.7" stop-color="#aaa"/><stop offset="0.84" stop-color="#444"/><stop offset="1" stop-color="#ccc"/></linearGradient><radialGradient id="vg" cx="0.5" cy="0.3" r="0.5"><stop offset="0" stop-color="#3a3a3a"/><stop offset="1" stop-color="#8a8a8a"/></radialGradient></defs>
<path d="M1691.40 345.40 L1694.40 345.40M1689.12 350.92 L1691.24 353.04M1683.60 353.20 L1683.60 356.20M1678.08 350.92 L1675.96 353.04M1675.80 345.40 L1672.80 345.40M1678.08 339.88 L1675.96 337.76M1683.60 337.60 L1683.60 334.60M1689.12 339.88 L1691.24 337.76" stroke="#dcdcdc" stroke-width="1.3" stroke-linecap="round" fill="none"/><circle cx="1683.6" cy="345.4" r="5.7" fill="none" stroke="#dcdcdc" stroke-width="1.3"/><path d="M1683.6 339.7 A5.7 5.7 0 0 1 1683.6 351.09999999999997 Z" fill="#dcdcdc"/>
<path d="M1702 352.2 L1702.00 346.70 L1702.97 346.70 L1702.97 343.20 L1703.94 343.20 L1703.94 345.70 L1704.91 345.70 L1704.91 348.20 L1705.88 348.20 L1705.88 344.70 L1706.85 344.70 L1706.85 341.70 L1707.82 341.70 L1707.82 339.70 L1708.79 339.70 L1708.79 344.20 L1709.76 344.20 L1709.76 346.20 L1710.73 346.20 L1710.73 342.70 L1711.70 342.70 L1711.70 337.70 L1712.67 337.70 L1712.67 342.20 L1713.64 342.20 L1713.64 345.20 L1714.61 345.20 L1714.61 341.20 L1715.58 341.20 L1715.58 338.70 L1716.55 338.70 L1716.55 343.20 L1717.52 343.20 L1717.52 345.70 L1718.49 345.70 L1718.49 341.70 L1719.46 341.70 L1719.46 340.20 L1720.43 340.20 L1720.43 344.70 L1721.40 344.70 L1721.40 347.20 L1722.37 347.20 L1722.37 344.20 L1723.34 344.20 L1723.34 342.20 L1724.31 342.20 L1724.31 346.20 L1725.28 346.20 L1725.28 352.2 Z" fill="#dcdcdc"/>
<g stroke="#9a9a9a" stroke-width="1.1" fill="none"><rect x="1733.6" y="337.6" width="19.8" height="15.8"/><path d="M1740.2 337V354M1746.8 337V354M1733 342.9H1754M1733 348.3H1754"/></g><path d="M1734 353.2 C1744 353.2 1743 337.8 1753 337.8" stroke="#dcdcdc" stroke-width="1.4" fill="none"/>
<rect x="1763.65" y="337.65" width="19.7" height="15.7" fill="none" stroke="#dcdcdc" stroke-width="1.3"/><path d="M1764 353 L1783 338 V353 Z" fill="#dcdcdc"/><path d="M1766.6 343H1771.8M1769.2 340.4V345.6" stroke="#dcdcdc" stroke-width="1.5"/><path d="M1775.4 348.6H1780.6" stroke="#535353" stroke-width="1.5"/>
<path d="M1795.6 338.6 H1812.4 L1804 354 Z" fill="url(#vg)" stroke="#dcdcdc" stroke-width="1.4" stroke-linejoin="miter"/>
<rect x="1658.65" y="371.65" width="19.7" height="15.7" fill="none" stroke="#dcdcdc" stroke-width="1.3"/><rect x="1660.4" y="373.2" width="16.2" height="5" fill="url(#hs)"/><rect x="1660.4" y="380" width="16.2" height="6" fill="url(#lr)"/>
<g fill="none" stroke="#dcdcdc" stroke-width="1.1"><circle cx="1698.4" cy="374.4" r="1.7"/><path d="M1689.8000000000002 375 H1696.6000000000001 M1700.2 375 H1707.0"/><path d="M1691.8000000000002 375.4 L1688.4 384 M1691.8000000000002 375.4 L1695.2 384 M1705.0 375.4 L1701.6000000000001 384 M1705.0 375.4 L1708.4 384"/></g><path d="M1688.0 383.6 H1695.6000000000001 A3.8 3.8 0 0 1 1688.0 383.6Z M1701.2 383.6 H1708.8000000000002 A3.8 3.8 0 0 1 1701.2 383.6Z" fill="#dcdcdc" stroke="#dcdcdc" stroke-width="0.8"/>
<rect x="1718.65" y="371.65" width="19.7" height="15.7" fill="none" stroke="#dcdcdc" stroke-width="1.3"/><rect x="1728.4" y="372" width="10" height="15" fill="#dcdcdc"/>
<path d="M1748.6 375.6 H1752.6 L1754 373 H1760 L1761.4 375.6 H1766.6 V386.6 H1748.6 Z" fill="#dcdcdc"/><circle cx="1757.6" cy="380.4" r="3.6" fill="#dcdcdc" stroke="#535353" stroke-width="1.3"/><circle cx="1765.4" cy="385.6" r="4.2" fill="#6a6a6a" stroke="#535353" stroke-width="2.6"/><circle cx="1765.4" cy="385.6" r="4.2" fill="#6a6a6a" stroke="#dcdcdc" stroke-width="1.2"/>
<circle cx="1788" cy="375.8" r="5.6" fill="#9a9a9a"/><circle cx="1783.4" cy="383" r="5.6" fill="#dcdcdc"/><circle cx="1792.6" cy="383" r="5.6" fill="#b8b8b8" fill-opacity="0.95"/><path d="M1784.4 379.6 Q1788 377.6 1791.6 379.6 Q1791.4 384 1788 386.4 Q1784.6 384 1784.4 379.6Z" fill="#7a7a7a"/><path d="M1788 379.8 L1790 383 L1788 384.6 L1786 383Z" fill="#555"/>
<rect x="1808" y="371" width="21" height="17" fill="#dcdcdc"/><rect x="1810.0" y="373.0" width="4.6" height="3.4" fill="#a0a0a0"/><rect x="1816.3" y="373.0" width="4.6" height="3.4" fill="#747474"/><rect x="1822.6" y="373.0" width="4.6" height="3.4" fill="#585858"/><rect x="1810.0" y="377.8" width="4.6" height="3.4" fill="#787878"/><rect x="1816.3" y="377.8" width="4.6" height="3.4" fill="#545454"/><rect x="1822.6" y="377.8" width="4.6" height="3.4" fill="#4a4a4a"/><rect x="1810.0" y="382.6" width="4.6" height="3.4" fill="#505050"/><rect x="1816.3" y="382.6" width="4.6" height="3.4" fill="#444444"/><rect x="1822.6" y="382.6" width="4.6" height="3.4" fill="#3c3c3c"/>
<rect x="1673.45" y="405.65" width="19.099999999999998" height="15.7" fill="none" stroke="#dcdcdc" stroke-width="1.3"/><path d="M1673.8 406 H1692.2 L1673.8 421 Z" fill="#535353"/><path d="M1692.2 406 V421 H1673.8 Z" fill="#dcdcdc"/><ellipse cx="1683.0" cy="413.5" rx="5.6" ry="4.6" fill="#dcdcdc" transform="rotate(-38 1683.0 413.5)"/><path d="M1678.2 417.4 A5.6 4.6 -38 0 0 1687.8 409.6 Z" fill="#535353"/>
<rect x="1703.65" y="405.65" width="19.7" height="15.7" fill="#dcdcdc" stroke="#dcdcdc" stroke-width="1.3"/><g><path d="M1704.4 410.6 L1710 406.4 H1704.4Z" fill="#6e6e6e"/><path d="M1704.4 416.6 L1718 406.4 H1722.6 V408.2 L1706.4 420.6 H1704.4Z" fill="#8c8c8c"/><path d="M1711.6 420.6 L1722.6 412.4 V416.4 L1717.2 420.6Z" fill="#6e6e6e"/></g>
<rect x="1733" y="404.5" width="21" height="16.5" fill="#dcdcdc"/><g fill="#4e4e4e"><rect x="1734.8" y="414.2" width="2" height="2.7"/><rect x="1736.1" y="411.5" width="4.8" height="3.1"/><rect x="1740.3" y="410.3" width="5.5" height="2.5"/><rect x="1744" y="407.5" width="5.8" height="3.1"/><rect x="1749.2" y="406.3" width="2.8" height="1.6"/><rect x="1741.2" y="418.9" width="10.8" height="0.9"/><rect x="1746.3" y="417.5" width="5.7" height="2.3"/><rect x="1750.3" y="416.2" width="1.7" height="3.6"/></g>
<rect x="1763.65" y="405.65" width="19.7" height="15.7" fill="#6e6e6e" stroke="#dcdcdc" stroke-width="1.3"/><path d="M1764.3 406.3 L1773.5 413.8 L1782.7 406.3Z" fill="#dcdcdc"/><path d="M1764.3 420.7 L1773.5 413.8 L1782.7 420.7Z" fill="#9e9e9e"/><path d="M1782.7 406.3 L1773.5 413.8 L1782.7 420.7Z" fill="#565656"/><path d="M1764.3 406.3 L1773.5 413.8 L1764.3 420.7Z" fill="#6e6e6e"/><rect x="1763.65" y="405.65" width="19.7" height="15.7" fill="none" stroke="#dcdcdc" stroke-width="1.6"/>
<rect x="1793.65" y="405.65" width="19.7" height="15.7" fill="url(#lr)" stroke="#dcdcdc" stroke-width="1.3"/>
</svg>
<div class="pgap" style="top:438px"></div>

<!-- ===== LAYERS PANEL ===== -->
<div class="panel" style="top:442px;height:587px">
<div class="ptabs"></div>
<div class="ptab on" style="left:0;width:56px;padding-left:12px">图层</div>
<div class="ptab" style="left:56px;width:56px;padding-left:12.5px">通道</div>
<div class="ptab" style="left:112px;width:56px;padding-left:12px">路径</div>
</div>
<svg style="left:1898px;top:454px" width="14" height="11" viewBox="0 0 14 11"><path d="M0.5 1H13M0.5 4H13M0.5 7H13M0.5 10H13" stroke="#c8c8c8" stroke-width="1.2"/></svg>
<!-- list bg -->
<div class="abs" style="left:1612px;top:589px;width:308px;height:410px;background:#4d4d4d"></div>
<div class="abs" style="left:1612px;top:998px;width:308px;height:1px;background:#414141"></div>
<!-- filter row -->
<div class="abs" style="left:1615.8px;top:487px;width:109px;height:26px;background:#4f4f4f;border:1px solid #5e5e5e;border-radius:3px"></div>
<div class="t" style="left:1645.5px;top:489px;font-size:14px;color:#8e8e8e;line-height:20px">类型</div>
<div class="abs" style="left:1612px;top:515px;width:308px;height:1px;background:#424242"></div>
<div class="abs" style="left:1615.8px;top:522.5px;width:147px;height:26px;background:#4f4f4f;border:1px solid #5e5e5e;border-radius:3px"></div>
<div class="t" style="left:1626.5px;top:525px;font-size:14.5px;color:#8e8e8e;line-height:20px">正常</div>
<div class="t" style="left:1773.5px;top:523px;font-size:14.5px;color:#9a9a9a;line-height:20px;letter-spacing:0.5px">不透明度:</div>
<div class="abs" style="left:1844.5px;top:523px;width:69px;height:23px;background:#4f4f4f;border:1px solid #5e5e5e;border-radius:3px"></div>
<div class="abs" style="left:1893px;top:524px;width:1px;height:21px;background:#5e5e5e"></div>
<div class="t" style="left:1848.5px;top:523px;font-size:13.5px;color:#7c7c7c;line-height:20px;letter-spacing:-0.45px">100%</div>
<div class="abs" style="left:1612px;top:550px;width:308px;height:1px;background:#424242"></div>
<div class="t" style="left:1620px;top:556px;font-size:14.5px;color:#9a9a9a;line-height:20px;letter-spacing:1px">锁定:</div>
<div class="t" style="left:1804px;top:557px;font-size:14.5px;color:#9a9a9a;line-height:20px;letter-spacing:0.6px">填充:</div>
<div class="abs" style="left:1844.5px;top:558px;width:69px;height:23px;background:#4f4f4f;border:1px solid #5e5e5e;border-radius:3px"></div>
<div class="abs" style="left:1893px;top:559px;width:1px;height:21px;background:#5e5e5e"></div>
<div class="t" style="left:1848.5px;top:558px;font-size:13.5px;color:#7c7c7c;line-height:20px;letter-spacing:-0.45px">100%</div>
<!-- layer row -->
<div class="abs" style="left:1612px;top:589px;width:38px;height:50px;background:#535353;border-bottom:1px solid #474747"></div>
<div class="abs" style="left:1650px;top:589px;width:249px;height:50px;background:#6d6d6d"></div>
<div class="t" style="left:1708px;top:605px;font-size:13.5px;color:#f2f2f2;line-height:20px">背景</div>
<svg style="left:1612px;top:480px" width="308" height="550" viewBox="1612 480 308 550">
<circle cx="1634.2" cy="497.4" r="4.1" fill="none" stroke="#a6a6a6" stroke-width="1.8"/><path d="M1631.2 500.8 L1628 504.2" stroke="#a6a6a6" stroke-width="2.6" stroke-linecap="round"/>
<path d="M1712.5 500 L1716 503.4 L1719.5 500" fill="none" stroke="#6c6c6c" stroke-width="1.2"/>
<rect x="1746.2" y="493.8" width="13.6" height="10.6" fill="none" stroke="#a6a6a6" stroke-width="1.3"/><path d="M1748 502.6 L1751 498 L1753 500.6 L1755.2 497.6 L1758 502.6Z" fill="#a6a6a6"/>
<circle cx="1782.5" cy="499" r="5.9" fill="none" stroke="#a6a6a6" stroke-width="1.3"/><path d="M1778.4 503.2 L1786.6 494.8 A5.9 5.9 0 0 1 1778.4 503.2Z" fill="#a6a6a6"/>
<text x="1813" y="504.8" text-anchor="middle" font-family="Liberation Serif,serif" font-weight="bold" font-size="17" fill="#a6a6a6">T</text>
<rect x="1838.4" y="494.2" width="9.4" height="9.4" fill="none" stroke="#a6a6a6" stroke-width="1.4"/><g fill="#535353" stroke="#a6a6a6" stroke-width="1.1"><rect x="1836.6" y="492.4" width="3.4" height="3.4"/><rect x="1846.2" y="492.4" width="3.4" height="3.4"/><rect x="1836.6" y="502" width="3.4" height="3.4"/><rect x="1846.2" y="502" width="3.4" height="3.4"/></g>
<path d="M1870.6 492.6 H1876.4 L1879.6 495.8 V504.6 H1874.6 M1876.2 492.8 V496 H1879.4" fill="none" stroke="#a6a6a6" stroke-width="1.3"/><rect x="1867" y="498.2" width="7.4" height="7.6" fill="#a6a6a6"/>
<rect x="1903.6" y="489" width="9" height="21" rx="4.5" fill="#4a4a4a"/><circle cx="1908.1" cy="493.4" r="5" fill="#a0a0a0"/>
<path d="M1750.5 535 L1754 538.4 L1757.5 535" fill="none" stroke="#6c6c6c" stroke-width="1.2"/>
<path d="M1899.8 534 L1903.3 537.4 L1906.8 534" fill="none" stroke="#6c6c6c" stroke-width="1.2"/>
<path d="M1899.8 569 L1903.3 572.4 L1906.8 569" fill="none" stroke="#6c6c6c" stroke-width="1.2"/>
<rect x="1668.4" y="562.7" width="13.2" height="12.8" fill="none" stroke="#a2a2a2" stroke-width="1.2"/><g fill="#a2a2a2"><rect x="1669" y="563.3" width="4" height="3.9"/><rect x="1677" y="563.3" width="4" height="3.9"/><rect x="1673" y="567.2" width="4" height="3.9"/><rect x="1669" y="571.1" width="4" height="3.9"/><rect x="1677" y="571.1" width="4" height="3.9"/></g>
<g transform="translate(1703,569.2)" fill="#a2a2a2"><path d="M8.2 -8.4 L6.4 -7.8 L-1.2 0.2 L1.6 3 Z"/><path d="M-1.8 0.8 L1 3.6 C2.6 6.4 -1.2 9 -8 8.6 C-5.2 7 -6.4 2.4 -1.8 0.8Z"/></g>
<g transform="translate(1729.4,569)" fill="#a2a2a2"><rect x="-5.6" y="-0.7" width="11.2" height="1.4"/><rect x="-0.7" y="-5.6" width="1.4" height="11.2"/><polygon points="0,-7.8 2.8,-4.4 -2.8,-4.4"/><polygon points="0,7.8 2.8,4.4 -2.8,4.4"/><polygon points="-7.8,0 -4.4,-2.8 -4.4,2.8"/><polygon points="7.8,0 4.4,-2.8 4.4,2.8"/></g>
<g fill="none" stroke="#a2a2a2" stroke-width="1.3"><path d="M1750.4 561.6 V575.8 M1747.6 564.6 H1759 L1762.4 568 V575.8 M1747.6 572.8 H1765 M1758.8 564.8 V568.2 H1762.2" /><path d="M1752.6 561.8 h2 M1757 561.8 h2 M1761.4 561.8 h2 M1752.6 575.9 h2 M1757 575.9 h2" stroke-width="1"/></g>
<rect x="1779" y="567.4" width="12.2" height="8.8" rx="0.8" fill="#a2a2a2"/><path d="M1781.6 567.6 V565.6 A3.5 3.5 0 0 1 1788.6 565.6 V567.6" fill="none" stroke="#a2a2a2" stroke-width="1.6"/><circle cx="1785.1" cy="571.6" r="1.2" fill="#535353"/>
<path d="M1622.8 614.6 C1626 609 1635.2 609 1638.4 614.6 C1635.2 620.2 1626 620.2 1622.8 614.6Z" fill="#e6e6e6"/><circle cx="1630.6" cy="614.4" r="3.1" fill="#535353"/><circle cx="1631.5" cy="613.4" r="0.9" fill="#e6e6e6"/>
<rect x="1654.5" y="594.5" width="39" height="39" fill="#fff" stroke="#1e1e1e" stroke-width="1"/><g transform="translate(1655.5,595.5) scale(0.074) translate(-566,-312)" fill="#000"><polygon points="668.3,390.2 713.6,402.9 686,420 708.4,467.9 737.4,384.8 790.2,412.4 765.9,443.6 760.4,524.8 717.1,524 676.5,476 634.5,443"/><polygon points="830.9,410.5 895.9,394.8 946,433.3 855.2,454.9 834.9,509.9 789.7,515.9 821.4,484.2"/><polygon points="872.8,503.9 921.6,486.8 983.9,563.4 1009.6,637.4 964.9,636.6 983.9,600 857.4,548"/><polygon points="673.8,520.6 724.4,578.3 714.4,617.6 724.4,684 740.7,711 622.8,654.2 672.9,612.7 645.6,581"/><polygon points="778,597.8 817.3,610.8 875.5,592.4 904,633.9 868.2,656.9 901.3,667.2 909.4,746.3 847.1,743.6 852,707 797.5,699.7 761,636.6"/></g>
<rect x="1867.6" y="612.2" width="10.8" height="9.2" rx="0.6" fill="none" stroke="#e0e0e0" stroke-width="1.2"/><path d="M1869.8 612 V610.6 A3.2 3.2 0 0 1 1876.2 610.6 V612" fill="none" stroke="#e0e0e0" stroke-width="1.2"/><circle cx="1873" cy="617" r="1.1" fill="#e0e0e0"/>
<g fill="none" stroke="#8a8a8a" stroke-width="1.6"><path d="M1672.4 1010.6 H1669.8 A3.9 3.9 0 0 0 1669.8 1018.4 H1672.4 M1675.6 1010.6 H1678.2 A3.9 3.9 0 0 1 1678.2 1018.4 H1675.6 M1670.6 1014.5 H1677.4"/></g>
<text x="1701" y="1019.4" font-family="Liberation Serif,serif" font-style="italic" font-size="17.5" fill="#8a8a8a">fx</text><path d="M1716 1022 h3.4 l-1.7 1.8z" fill="#6e6e6e"/>
<rect x="1733.6" y="1008.4" width="16.4" height="11" fill="#dcdcdc"/><circle cx="1741.8" cy="1013.9" r="3.6" fill="#484848"/>
<circle cx="1775.2" cy="1014" r="6" fill="none" stroke="#dcdcdc" stroke-width="1.3"/><path d="M1771 1018.3 L1779.5 1009.8 A6 6 0 0 0 1771 1018.3Z" fill="#dcdcdc"/><path d="M1783 1022 h3.6 l-1.8 1.9z" fill="#dcdcdc"/>
<path d="M1802 1007.9 H1808 L1809.4 1009.6 H1817.2 V1019.8 H1802 Z" fill="#dcdcdc"/>
<path d="M1837.6 1009 H1849.4 V1019.2 H1842.4 L1837.6 1014.6 Z M1837.6 1014.6 H1842.4 V1019.2" fill="none" stroke="#dcdcdc" stroke-width="1.4"/><path d="M1838 1015 H1842 V1019 Z" fill="#dcdcdc"/>
<g fill="none" stroke="#8a8a8a" stroke-width="1.2"><path d="M1870.2 1009.6 H1882.8 M1874.4 1009.4 V1007.4 H1878.6 V1009.4 M1871.6 1010 L1872.2 1021 H1880.8 L1881.4 1010 M1874.6 1012 V1019 M1876.5 1012 V1019 M1878.4 1012 V1019"/></g>
</svg>

<!-- ===== DESKTOP STRIP ===== -->
<div class="abs" style="left:0;top:1029px;width:413px;height:10px;background:linear-gradient(to right,#0a0d0c 0%,#10140f 20%,#0b0d12 45%,#0e1014 100%)"></div>
<div class="abs" style="left:413px;top:1029px;width:82px;height:10px;background:#6a6921"></div>
<div class="abs" style="left:495px;top:1029px;width:79px;height:10px;background:#27292c"></div>
<div class="abs" style="left:574px;top:1029px;width:6px;height:10px;background:#121316"></div>
<div class="abs" style="left:580px;top:1029px;width:171px;height:10px;background:#2a2c30"></div>
<div class="abs" style="left:751px;top:1029px;width:343px;height:10px;background:#090909"></div>
<div class="abs" style="left:1094px;top:1029px;width:172px;height:10px;background:#43474a"></div>
<div class="abs" style="left:1266px;top:1029px;width:654px;height:10px;background:linear-gradient(to right,#17222a 0%,#1b272d 50%,#1d262b 100%)"></div>
<div class="abs" style="left:1914px;top:1030px;width:1px;height:9px;background:#6a7378"></div>

</body>
</html>
